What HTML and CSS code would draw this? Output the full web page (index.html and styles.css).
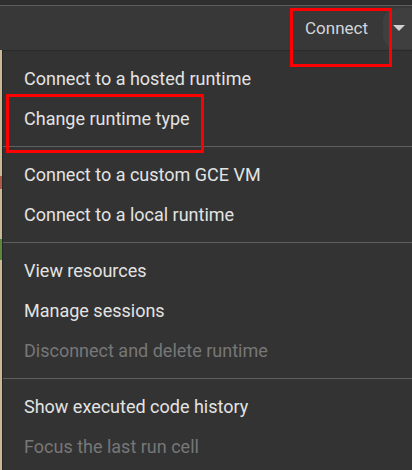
FILE: index.html
```html
<!DOCTYPE html>
<html>
<head>
<meta charset="utf-8">
<link rel="stylesheet" href="styles.css">
</head>
<body>
<div class="topstrip"></div>
<div class="toolbar">
  <div class="connect-btn">
    <span class="connect-label">Connect</span>
    <span class="dropdown"><span class="caret"></span></span>
  </div>
  <div class="mark mark-connect"></div>
</div>
<div class="main">
  <div class="sliver"></div>
  <div class="menu">
    <div class="item">Connect to a hosted runtime</div>
    <div class="item">Change runtime type</div>
    <div class="sep"></div>
    <div class="item">Connect to a custom GCE VM</div>
    <div class="item">Connect to a local runtime</div>
    <div class="sep"></div>
    <div class="item">View resources</div>
    <div class="item">Manage sessions</div>
    <div class="item disabled">Disconnect and delete runtime</div>
    <div class="sep"></div>
    <div class="item">Show executed code history</div>
    <div class="item disabled">Focus the last run cell</div>
  </div>
  <div class="mark mark-change"></div>
</div>
</body>
</html>
```
FILE: styles.css
```css
html, body {
  margin: 0;
  padding: 0;
}
body {
  width: 412px;
  height: 470px;
  overflow: hidden;
  background: #383838;
  font-family: Roboto, "Liberation Sans", sans-serif;
  position: relative;
}
.topstrip {
  height: 5px;
  background: #2e2e2e;
  border-bottom: 1px solid #5c5c5c;
}
.toolbar {
  height: 44px;
  background: #383838;
  display: flex;
  justify-content: flex-end;
  align-items: center;
  position: relative;
  z-index: 2;
}
.connect-btn {
  display: flex;
  align-items: center;
  height: 41px;
}
.connect-label {
  color: #d2d6dc;
  font-size: 17px;
  padding-right: 15px;
}
.dropdown {
  width: 29px;
  height: 41px;
  background: #3f3f3f;
  border-radius: 14px 0 0 14px;
  display: flex;
  align-items: center;
  justify-content: center;
}
.caret {
  width: 0;
  height: 0;
  border-left: 6px solid transparent;
  border-right: 6px solid transparent;
  border-top: 6px solid #d0d0d0;
  margin-left: 2px;
}
.main {
  display: flex;
  position: relative;
  z-index: 1;
}
.sliver {
  width: 2px;
  background: linear-gradient(#c9b995 0 30%, #b05a4a 30% 33%, #c9b995 33% 45%, #5b8a3a 45% 50%, #c9b995 50% 100%);
  border-right: 1px solid #262626;
}
.menu {
  flex: 1;
  background: #333333;
  border-top: 1px solid #2a2a2a;
  padding: 7px 0 8px;
  height: 420px;
  box-sizing: border-box;
}
.item {
  height: 40px;
  display: flex;
  align-items: center;
  padding-left: 21px;
  color: #e3e3e3;
  font-size: 18px;
  padding-top: 1px;
  box-sizing: border-box;
}
.item.disabled {
  color: #777777;
}
.sep {
  height: 1px;
  background: #5f5f5f;
  margin: 8px 0 7px;
}
.mark {
  position: absolute;
  border: 3px solid #ff0000;
  box-sizing: border-box;
  z-index: 5;
}
.mark-connect {
  left: 290px;
  top: 2px;
  width: 102px;
  height: 59px;
}
.mark-change {
  left: 6px;
  top: 44px;
  width: 198px;
  height: 59px;
}
```
